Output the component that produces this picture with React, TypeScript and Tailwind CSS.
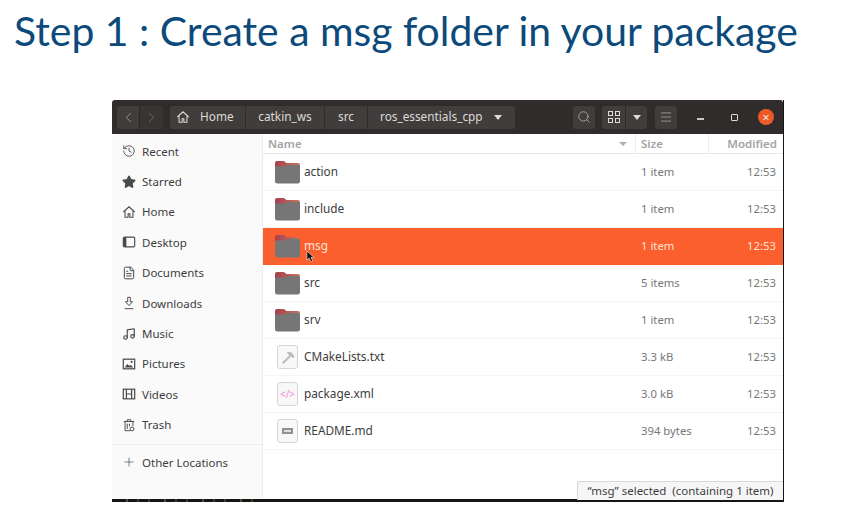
import { ReactNode } from "react";
import { ChevronLeft, ChevronRight, Search, Menu, Star, History, Music, FileText, Plus } from "lucide-react";

// sidebar icons that lucide has no close match for
const ico = "w-[14px] h-[14px] text-[#4a4a4a]";

function HomeIco({ className = ico }: { className?: string }) {
  return (
    <svg viewBox="0 0 16 16" className={className} fill="none" stroke="currentColor" strokeWidth="1.2">
      <path d="M1.5 8 8 2l6.500 6M3.500 7v7h3.500v-4h2v4h3.500V7" />
    </svg>
  );
}

function DesktopIco() {
  return (
    <svg viewBox="0 0 16 16" className={ico}>
      <rect x="1.500" y="2.500" width="13" height="11" rx="1.500" fill="none" stroke="currentColor" strokeWidth="1.300" />
      <rect x="1.500" y="2.500" width="3.500" height="11" fill="currentColor" />
    </svg>
  );
}

function DownloadIco() {
  return (
    <svg viewBox="0 0 16 16" className={ico} fill="none" stroke="currentColor" strokeWidth="1.100">
      <path d="M6.500 1.500h3v5h2.500L8 11 4 6.500h2.500zM3 14.500h10" />
    </svg>
  );
}

function PictureIco() {
  return (
    <svg viewBox="0 0 16 16" className={ico}>
      <rect x="1.500" y="2.500" width="13" height="11" fill="none" stroke="currentColor" strokeWidth="1.400" />
      <path d="M3 12l3-4 2 2 2-1 3 3z" fill="currentColor" />
      <circle cx="11" cy="5.500" r="1.300" fill="currentColor" />
    </svg>
  );
}

function VideoIco() {
  return (
    <svg viewBox="0 0 16 16" className={ico} fill="none" stroke="currentColor" strokeWidth="1.400">
      <rect x="1.500" y="2.500" width="13" height="11" />
      <path d="M5 2.500v11M11 2.500v11M5 8h6" />
    </svg>
  );
}

function TrashIco() {
  return (
    <svg viewBox="0 0 16 16" className={ico} fill="none" stroke="currentColor" strokeWidth="1.100">
      <path d="M2 4h12M6 4V2h4v2M3.500 4v10.500h6M12.500 4v5M6 6.500v6M8.500 6.500v3" />
      <circle cx="11.500" cy="12.500" r="2.200" />
    </svg>
  );
}

function HammerIco() {
  return (
    <svg viewBox="0 0 16 16" className="w-[16px] h-[16px]" fill="#bdbdbd">
      <path d="M2 13.500 9.500 6l1.500 1.500L3.500 15z" />
      <path d="M6.500 3.500Q10 1.500 13 5l1.500 3-1.500 1-2-1.500L8.500 5.500Q8 4.500 6.500 3.500z" />
    </svg>
  );
}

function Folder() {
  return (
    <svg viewBox="0 0 27 24" className="w-[27px] h-[24px] shrink-0">
      <defs>
        <linearGradient id="tab" x1="0" x2="1" y1="0" y2="0">
          <stop offset="0" stopColor="#a63f50" />
          <stop offset="1" stopColor="#c4785e" />
        </linearGradient>
      </defs>
      <path d="M1 3Q1 1 3 1h7l2.500 2H24q2 0 2 2v5H1z" fill="url(#tab)" />
      <path d="M1 6.500h10.500l2-1.500H24.500Q26 5 26 7v14q0 2.500-2.500 2.500h-20Q1 23.500 1 21z" fill="#767676" />
    </svg>
  );
}

function FileBox({ children }: { children: ReactNode }) {
  return (
    <div className="mx-[3px] w-[21px] h-[24px] shrink-0 rounded-[3px] border border-[#d6d6d6] bg-[#f8f8f8] flex items-center justify-center">
      {children}
    </div>
  );
}

const places: [string, ReactNode][] = [
  ["Recent", <History className={ico} strokeWidth={1.500} />],
  ["Starred", <Star className={ico} fill="currentColor" />],
  ["Home", <HomeIco />],
  ["Desktop", <DesktopIco />],
  ["Documents", <FileText className={ico} strokeWidth={1.700} />],
  ["Downloads", <DownloadIco />],
  ["Music", <Music className={ico} strokeWidth={2} />],
  ["Pictures", <PictureIco />],
  ["Videos", <VideoIco />],
  ["Trash", <TrashIco />],
];

const files: { name: string; size: string; icon: ReactNode; selected?: boolean }[] = [
  { name: "action", size: "1 item", icon: <Folder /> },
  { name: "include", size: "1 item", icon: <Folder /> },
  { name: "msg", size: "1 item", icon: <Folder />, selected: true },
  { name: "src", size: "5 items", icon: <Folder /> },
  { name: "srv", size: "1 item", icon: <Folder /> },
  { name: "CMakeLists.txt", size: "3.3 kB", icon: <FileBox><HammerIco /></FileBox> },
  {
    name: "package.xml",
    size: "3.0 kB",
    icon: (
      <FileBox>
        <span className="text-[10px] leading-none text-[#f08ad8]">&lt;/&gt;</span>
      </FileBox>
    ),
  },
  {
    name: "README.md",
    size: "394 bytes",
    icon: (
      <FileBox>
        <span className="w-[11px] h-[6px] bg-[#8b939b] flex items-center justify-center">
          <span className="w-[7px] h-[2px] bg-[#dfe1e3]" />
        </span>
      </FileBox>
    ),
  },
];

// specks of the terminal showing under the window
const specks = [6, 20, 24, 48, 54, 78, 84, 110, 120, 145, 148];

export default function App() {
  return (
    <div className="w-[845px] h-[519px] bg-white overflow-hidden font-['Noto_Sans',sans-serif]">
      <h1 className="h-[100px] pl-[14px] pt-[7px] text-[40.900px] leading-[48px] font-normal text-[#0b4a7a] whitespace-nowrap font-['Lato',sans-serif]">
        Step 1 : Create a msg folder in your package
      </h1>

      <div className="relative ml-[112px] w-[672px] h-[402px] bg-white border-r-[1.500px] border-[#151515] flex flex-col overflow-hidden">
        {/* header bar */}
        <div className="h-[34px] shrink-0 bg-[#302c2b] flex items-center pl-[5px] text-[11.800px] text-[#dedad6] rounded-t-[3px]">
          <div className="flex h-[23px] rounded-[3px] bg-[#403d3c] text-[#a9a6a3]">
            <div className="w-[23px] flex items-center justify-center border-r border-[#2a2827]">
              <ChevronLeft className="w-[17px] h-[17px]" strokeWidth={1.100} />
            </div>
            <div className="w-[23px] flex items-center justify-center bg-[#383534] rounded-r-[3px]">
              <ChevronRight className="w-[17px] h-[17px] text-[#77736f]" strokeWidth={1.100} />
            </div>
          </div>

          <div className="ml-[7px] flex h-[23px] items-center rounded-[3px] bg-[#403d3c]">
            <div className="h-full w-[76px] flex items-center pl-[6px] gap-[10px] border-r border-[#2f2c2b]">
              <HomeIco className="w-[14px] h-[14px] text-[#dedad6]" />
              <span>Home</span>
            </div>
            <div className="h-full w-[79px] flex items-center justify-center border-r border-[#2f2c2b]">catkin_ws</div>
            <div className="h-full w-[43px] flex items-center justify-center border-r border-[#2f2c2b]">src</div>
            <div className="h-full w-[147px] flex items-center pl-[12px] whitespace-nowrap">
              ros_essentials_cpp
              <span className="ml-[11px] w-0 h-0 border-x-[4px] border-x-transparent border-t-[5px] border-t-[#dedad6]" />
            </div>
          </div>

          <div className="ml-[58px] w-[22px] h-[23px] rounded-[3px] bg-[#403d3c] flex items-center justify-center">
            <Search className="w-[14px] h-[14px] text-[#c6c3bf]" strokeWidth={1.200} />
          </div>
          <div className="ml-[7px] flex h-[23px] rounded-[3px] bg-[#403d3c]">
            <div className="w-[24px] flex items-center justify-center border-r border-[#2f2c2b]">
              <div className="grid grid-cols-2 gap-[2px]">
                <span className="w-[5px] h-[5px] border border-[#dedad6]" />
                <span className="w-[5px] h-[5px] border border-[#dedad6]" />
                <span className="w-[5px] h-[5px] border border-[#dedad6]" />
                <span className="w-[5px] h-[5px] border border-[#dedad6]" />
              </div>
            </div>
            <div className="w-[21px] flex items-center justify-center">
              <span className="w-0 h-0 border-x-[4px] border-x-transparent border-t-[5px] border-t-[#dedad6]" />
            </div>
          </div>
          <div className="ml-[8px] w-[22px] h-[23px] rounded-[3px] bg-[#403d3c] flex items-center justify-center">
            <Menu className="w-[14px] h-[14px] text-[#c6c3bf]" strokeWidth={1.100} />
          </div>

          <span className="ml-[20px] mt-[4px] w-[7px] h-[1.500px] bg-[#c9c6c2]" />
          <span className="ml-[27px] w-[7px] h-[7px] border border-[#dedad6] rounded-[1px]" />
          <div className="ml-[20px] w-[16px] h-[16px] rounded-full bg-[#ec5a28] flex items-center justify-center text-[13px] leading-none text-[#f7e3da]">×</div>
        </div>

        <div className="flex flex-1 min-h-0">
          {/* sidebar */}
          <aside className="w-[151px] shrink-0 bg-[#fafafa] border-r border-[#ececec] pt-[2px] text-[11.500px] text-[#3d3d3d]">
            {places.map(([label, icon]) => (
              <div key={label} className="h-[30.4px] flex items-center pl-[10px] gap-[6px]">
                {icon}
                <span>{label}</span>
              </div>
            ))}
            <div className="mt-[4px] border-t border-[#eeeeee] h-[36px] flex items-center pl-[10px] gap-[6px]">
              <Plus className={ico} strokeWidth={1.200} />
              <span>Other Locations</span>
            </div>
          </aside>

          {/* file list */}
          <main className="flex-1 min-w-0 text-[11.800px] text-[#3d3d3d]">
            <div className="h-[20px] flex items-center border-b border-[#e8e8e8] text-[#a3a3a3] font-semibold text-[11.500px]">
              <div className="flex-1 flex items-center justify-between pl-[5px] pr-[8px] h-full border-r border-[#eeeeee]">
                <span>Name</span>
                <span className="w-0 h-0 border-x-[4px] border-x-transparent border-t-[4px] border-t-[#b0b0b0]" />
              </div>
              <div className="w-[73px] h-full pl-[5px] flex items-center border-r border-[#eeeeee]">Size</div>
              <div className="w-[74px] h-full pr-[6px] flex items-center justify-end">Modified</div>
            </div>
            {files.map((f) => (
              <div
                key={f.name}
                className={`h-[37px] pl-[11px] flex items-center border-b ${f.selected ? "bg-[#fa5f2d] border-[#fa5f2d] text-[#fde2d6]" : "border-[#f5f5f5]"}`}
              >
                {f.icon}
                <span className="flex-1 pl-[3px]">{f.name}</span>
                <span className={`w-[73px] pl-[5px] text-[11.300px] ${f.selected ? "" : "text-[#777777]"}`}>{f.size}</span>
                <span className={`w-[74px] pr-[7px] text-right text-[11.300px] ${f.selected ? "" : "text-[#777777]"}`}>12:53</span>
              </div>
            ))}
          </main>
        </div>

        {/* dark strip along the bottom edge */}
        <div className="h-[3px] shrink-0 bg-[#151515] flex">
          {specks.map((x, i) => (
            <span key={x} className={`w-[2px] ${i % 3 === 0 ? "ml-[14px] bg-[#4c4c30]" : "ml-[9px] bg-[#3a4030]"}`} />
          ))}
        </div>

        {/* floating status label */}
        <div className="absolute right-0 bottom-[2px] w-[206px] h-[19px] bg-[#f6f6f6] border-t border-l border-[#d8d8d8] rounded-tl-[3px] flex items-center justify-center text-[11.500px] text-[#3d3d3d] whitespace-pre">
          “msg” selected  (containing 1 item)
        </div>

        {/* mouse pointer */}
        <svg viewBox="0 0 10 14" className="absolute left-[194px] top-[150px] w-[9px] h-[13px]">
          <path d="M1 1v10l2.500-2.200L5.500 13l2-1-2-4H9z" fill="#111" stroke="#fff" strokeWidth="0.600" />
        </svg>
      </div>
    </div>
  );
}
